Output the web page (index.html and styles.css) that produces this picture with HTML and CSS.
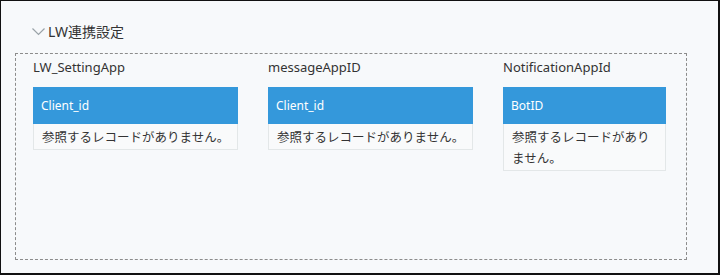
FILE: index.html
```html
<!DOCTYPE html>
<html lang="ja">

<head>
    <meta charset="UTF-8">
    <meta name="viewport" content="width=device-width, initial-scale=1.0">
    <title>LW連携設定</title>
    <link rel="stylesheet" href="styles.css">
</head>

<body>
    <div class="frame">
        <!-- Group title -->
        <div class="group-title">
            <svg class="chevron" width="13" height="8" viewBox="0 0 13 8">
                <polyline points="0.5,0.5 6.5,6.5 12.5,0.5" fill="none" stroke="#9aa3a8" stroke-width="1.2"/>
            </svg>
            <span>LW連携設定</span>
        </div>

        <!-- Dashed group body -->
        <div class="group-body">
            <div class="field">
                <div class="field-label">LW_SettingApp</div>
                <table class="ref-table">
                    <thead>
                        <tr><th>Client_id</th></tr>
                    </thead>
                    <tbody>
                        <tr><td>参照するレコードがありません。</td></tr>
                    </tbody>
                </table>
            </div>

            <div class="field">
                <div class="field-label">messageAppID</div>
                <table class="ref-table">
                    <thead>
                        <tr><th>Client_id</th></tr>
                    </thead>
                    <tbody>
                        <tr><td>参照するレコードがありません。</td></tr>
                    </tbody>
                </table>
            </div>

            <div class="field narrow">
                <div class="field-label">NotificationAppId</div>
                <table class="ref-table">
                    <thead>
                        <tr><th>BotID</th></tr>
                    </thead>
                    <tbody>
                        <tr><td>参照するレコードがありません。</td></tr>
                    </tbody>
                </table>
            </div>
        </div>
    </div>
</body>

</html>
```

FILE: styles.css
```css
/* Page base */
body {
    margin: 0;
    font-family: "Noto Sans", "Noto Sans CJK JP", sans-serif;
    color: #333;
}

/* Outer frame of the screenshot */
.frame {
    box-sizing: border-box;
    width: 720px;
    height: 275px;
    background-color: #f7f9fb;
    border-style: solid;
    border-color: #111;
    border-width: 1px 2px 2px 1px;
    padding: 19px 0 0 14px;
}

/* Group title with chevron */
.group-title {
    display: flex;
    align-items: center;
    gap: 3px;
    padding-left: 17px;
    font-size: 14px;
    height: 22px;
}

.chevron {
    margin-top: 1px;
}

/* Dashed border around the fields */
.group-body {
    display: flex;
    align-items: flex-start;
    width: 672px;
    height: 207px;
    box-sizing: border-box;
    margin-top: 11px;
    border: 1px dashed #8c8c8c;
    padding: 3px 0 0 17px;
}

.field {
    width: 235px;
}

.field.narrow {
    width: 163px;
}

.field-label {
    font-size: 13px;
    height: 20px;
    line-height: 20px;
    margin-bottom: 10px;
}

/* Reference table */
.ref-table {
    border-collapse: collapse;
    width: 205px;
}

.narrow .ref-table {
    width: 163px;
}

.ref-table th {
    background-color: #3498db;
    color: #fff;
    font-weight: normal;
    font-size: 12px;
    text-align: left;
    height: 35px;
    padding: 0 7px;
    border: 1px solid #3498db;
}

.ref-table td {
    background-color: #f9fafb;
    border: 1px solid #e3e7e8;
    font-size: 12.5px;
    line-height: 21px;
    padding: 3px 7px 1px 8px;
}
```
